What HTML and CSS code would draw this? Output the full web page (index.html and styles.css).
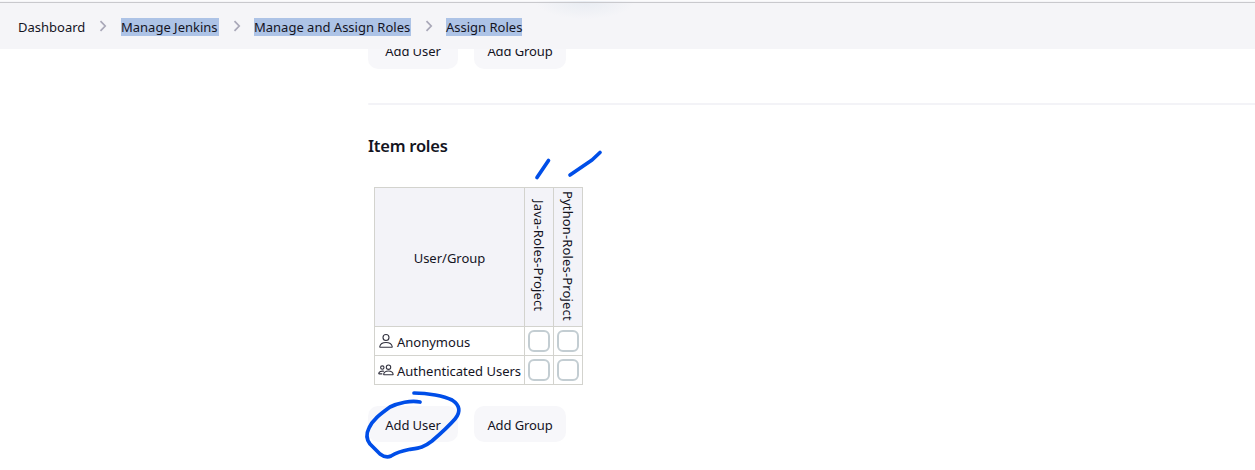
FILE: index.html
```html
<!DOCTYPE html>
<html lang="en">
<head>
<meta charset="utf-8">
<title>Assign Roles</title>
<link rel="stylesheet" href="styles.css">
</head>
<body>
<nav class="breadcrumbs">
  <span class="crumb crumb-home">Dashboard</span>
  <svg class="chevron" viewBox="0 0 8 12"><path d="M1.5 1.2 6.2 6 1.5 10.8"/></svg>
  <span class="crumb selected crumb-manage">Manage Jenkins</span>
  <svg class="chevron" viewBox="0 0 8 12"><path d="M1.5 1.2 6.2 6 1.5 10.8"/></svg>
  <span class="crumb selected crumb-roles">Manage and Assign Roles</span>
  <svg class="chevron" viewBox="0 0 8 12"><path d="M1.5 1.2 6.2 6 1.5 10.8"/></svg>
  <span class="crumb selected crumb-assign">Assign Roles</span>
</nav>
<main class="content">
  <div class="actions actions-top">
    <button class="button button-user">Add User</button>
    <button class="button button-group">Add Group</button>
  </div>
  <hr class="divider">
  <h2 class="title">Item roles</h2>
  <div class="matrix">
    <div class="cell head corner">User/Group</div>
    <div class="cell head"><span class="vertical">Java-Roles-Project</span></div>
    <div class="cell head"><span class="vertical">Python-Roles-Project</span></div>
    <div class="cell name">
      <svg class="icon" viewBox="0 0 16 16"><circle cx="8" cy="4.500" r="3"/><path d="M8 9.500c3.400 0 5.700 1.500 6.200 4 .1.500-.1.800-.6.800H2.400c-.5 0-.7-.3-.6-.8.5-2.500 2.800-4 6.200-4z"/></svg>
      <span>Anonymous</span>
    </div>
    <div class="cell"><span class="check"></span></div>
    <div class="cell"><span class="check"></span></div>
    <div class="cell name">
      <svg class="icon" viewBox="0 0 16 16"><circle cx="10.500" cy="5.200" r="2.200"/><circle cx="4.300" cy="5.600" r="1.700"/><path d="M10.400 9c2.600 0 4.400 1.200 4.700 3.100.1.400-.1.600-.5.600H6.200c-.4 0-.6-.2-.5-.6C6 10.200 7.800 9 10.400 9zM6 9.300C3.200 8.700 1 9.800.7 11.400c-.1.300.1.500.4.500h3.200"/></svg>
      <span>Authenticated Users</span>
    </div>
    <div class="cell"><span class="check"></span></div>
    <div class="cell"><span class="check"></span></div>
  </div>
  <div class="actions">
    <button class="button button-user">Add User</button>
    <button class="button button-group">Add Group</button>
  </div>
</main>
<svg class="ink" viewBox="0 0 1255 470">
  <path d="M537 177.500 548.500 160.500M570 175 592 160 600 152.500"/>
  <path d="M414 393C428 393 444 396 452 400C460 405 461 412 455 419C448 427 439 435 432 441C423 448 419 448 409 449.500C399 451.500 396 453 391 456C387 458 384 457 380 454L370 444C366 439 366 434 369 428C373 419 382 413 390 407C398 403 411 400 420 402"/>
</svg>
</body>
</html>
```
FILE: styles.css
```css
* { box-sizing: border-box; }
body {
  margin: 0;
  height: 470px;
  overflow: hidden;
  background: #fff;
  color: #14141f;
  font: 13px/18px "Noto Sans", "Open Sans", sans-serif;
}
.breadcrumbs {
  position: relative;
  z-index: 1;
  display: flex;
  align-items: center;
  height: 49px;
  padding: 4px 0 0 18px;
  border-top: 1px solid #fbfbfc;
  background:
    linear-gradient(#c9c9cd, #c9c9cd) 0 1px / 100% 1px no-repeat,
    radial-gradient(ellipse 50px 18px at 585px 0, #e8ecf2, transparent),
    #f5f5f8;
}
.crumb { flex: none; height: 18px; white-space: nowrap; }
.crumb-home { width: 67px; }
.crumb-manage { width: 98px; }
.crumb-roles { width: 157px; }
.crumb-assign { width: 76px; }
.selected { background: #adc3e6; }
.chevron {
  flex: none;
  width: 8px;
  height: 12px;
  margin: 0 13px 3px 14px;
  fill: none;
  stroke: #a9a8b8;
  stroke-width: 1.7;
}
.crumb-home + .chevron { margin-right: 14px; }
.content { padding-left: 368px; }
.actions { display: flex; gap: 16px; margin-top: 21px; }
.actions-top { margin-top: -16px; }
.actions-top .button { padding-bottom: 1px; }
.button {
  flex: none;
  height: 36px;
  padding: 1px 0 0;
  border: 0;
  border-radius: 10px;
  background: #f7f7fa;
  color: inherit;
  font: inherit;
  letter-spacing: -0.1px;
}
.button-user { width: 90px; }
.button-group { width: 92px; }
.divider { height: 2px; margin: 34px 0 0; border: 0; border-radius: 2px 0 0 2px; background: #f3f3f7; }
.title { margin: 29px 0 0; font-size: 16.5px; line-height: 24px; font-weight: 600; letter-spacing: -0.25px; }
.matrix {
  display: grid;
  grid-template-columns: 149px 28px 28px;
  grid-template-rows: 138px 28px 28px;
  gap: 1px;
  width: 209px;
  margin: 29px 0 0 6px;
  padding: 1px;
  background: #d3d3ce;
}
.cell { display: flex; align-items: center; justify-content: center; background: #fff; min-width: 0; white-space: nowrap; }
.head { background: #f3f3f8; }
.corner { padding-top: 2px; }
.name { justify-content: flex-start; gap: 3px; padding: 1px 0 0 3px; }
.icon { flex: none; width: 16px; height: 16px; margin-bottom: 2px; fill: none; stroke: #333340; stroke-width: 1.1; }
.vertical { writing-mode: vertical-rl; letter-spacing: 0.15px; margin-bottom: 2px; }
.check { width: 22px; height: 22px; border: 2px solid #c3cdd2; border-radius: 6px; background: #fff; }
.ink {
  position: absolute;
  z-index: 2;
  top: 0;
  left: 0;
  width: 1255px;
  height: 470px;
  fill: none;
  stroke: #004ee8;
  stroke-width: 3.7;
  stroke-linecap: round;
  stroke-linejoin: round;
  pointer-events: none;
}
```
